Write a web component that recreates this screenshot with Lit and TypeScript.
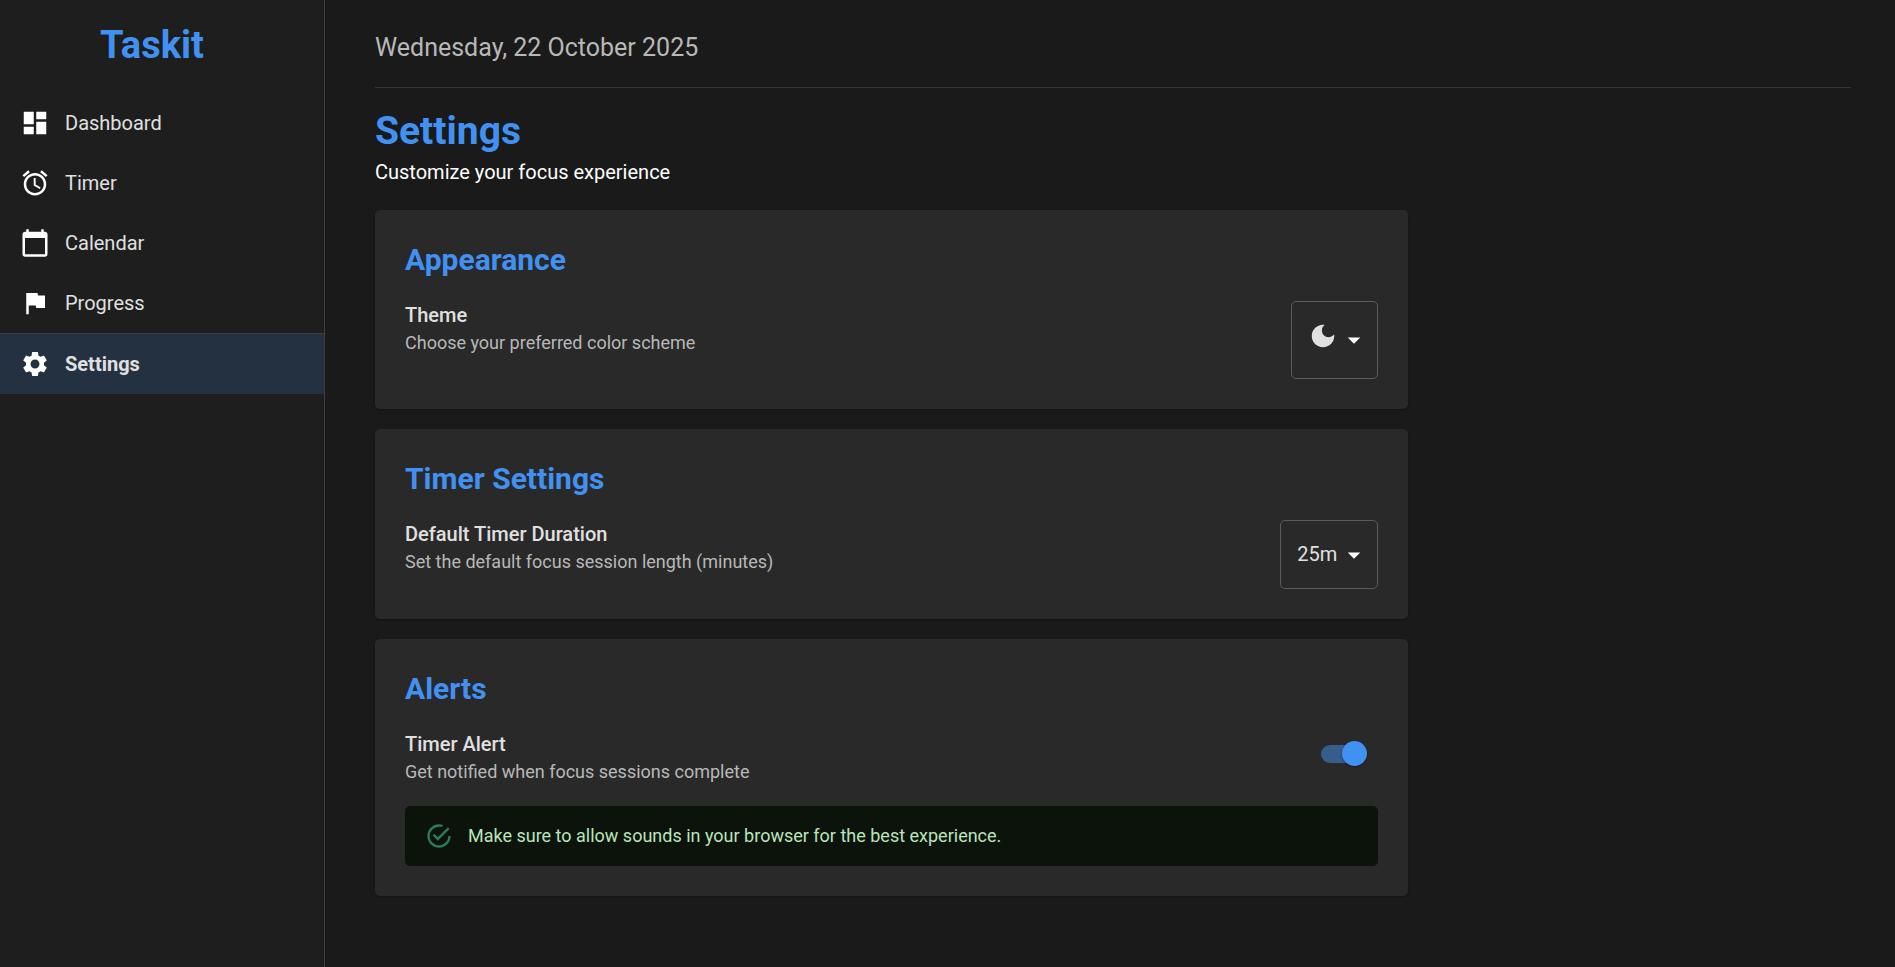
import { LitElement, html, css, svg } from "lit";
import { customElement, state } from "lit/decorators.js";

const icons = {
  dashboard: svg`<path d="M3 13h8V3H3v10zm0 8h8v-6H3v6zm10 0h8V11h-8v10zm0-18v6h8V3h-8z"/>`,
  timer: svg`<path d="M22 5.72l-4.6-3.86-1.29 1.53 4.6 3.86L22 5.72zM7.88 3.39L6.6 1.86 2 5.71l1.29 1.53 4.59-3.85zM12.5 8H11v6l4.75 2.85.75-1.23-4-2.37V8zM12 4c-4.97 0-9 4.03-9 9s4.02 9 9 9c4.97 0 9-4.03 9-9s-4.03-9-9-9zm0 16c-3.87 0-7-3.13-7-7s3.13-7 7-7 7 3.13 7 7-3.13 7-7 7z"/>`,
  calendar: svg`<path d="M20 3h-1V1h-2v2H7V1H5v2H4c-1.1 0-2 .9-2 2v16c0 1.1.9 2 2 2h16c1.1 0 2-.9 2-2V5c0-1.1-.9-2-2-2zm0 18H4V8h16v13z"/>`,
  flag: svg`<path d="M14.4 6L14 4H5v17h2v-7h5.6l.4 2h7V6z"/>`,
  gear: svg`<path d="M19.14 12.94c.04-.3.06-.61.06-.94 0-.32-.02-.64-.07-.94l2.03-1.58c.18-.14.23-.41.12-.61l-1.92-3.32c-.12-.22-.37-.29-.59-.22l-2.39.96c-.5-.38-1.03-.7-1.62-.94l-.36-2.54c-.04-.24-.24-.41-.48-.41h-3.84c-.24 0-.43.17-.47.41l-.36 2.54c-.59.24-1.13.57-1.62.94l-2.39-.96c-.22-.08-.47 0-.59.22L2.74 8.87c-.12.21-.08.47.12.61l2.03 1.58c-.05.3-.09.63-.09.94s.02.64.07.94l-2.03 1.58c-.18.14-.23.41-.12.61l1.92 3.32c.12.22.37.29.59.22l2.39-.96c.5.38 1.03.7 1.62.94l.36 2.54c.05.24.24.41.48.41h3.84c.24 0 .44-.17.47-.41l.36-2.54c.59-.24 1.13-.56 1.62-.94l2.39.96c.22.08.47 0 .59-.22l1.92-3.32c.12-.22.07-.47-.12-.61l-2.01-1.58zM12 15.6c-1.98 0-3.6-1.62-3.6-3.6s1.62-3.6 3.6-3.6 3.6 1.62 3.6 3.6-1.62 3.6-3.6 3.6z"/>`,
  moon: svg`<path d="M12 3c-4.97 0-9 4.03-9 9s4.03 9 9 9 9-4.03 9-9c0-.46-.04-.92-.1-1.36-.98 1.37-2.58 2.26-4.4 2.26-2.98 0-5.4-2.42-5.4-5.4 0-1.81.89-3.42 2.26-4.4-.44-.06-.9-.1-1.36-.1z"/>`,
  caret: svg`<path d="M7 10l5 5 5-5z"/>`,
  check: svg`<path d="M20,12A8,8 0 0,1 12,20A8,8 0 0,1 4,12A8,8 0 0,1 12,4C12.76,4 13.5,4.11 14.2,4.31L15.77,2.74C14.61,2.26 13.34,2 12,2A10,10 0 0,0 2,12A10,10 0 0,0 12,22A10,10 0 0,0 22,12M7.91,10.08L6.5,11.5L11,16L21,6L19.59,4.58L11,13.17L7.91,10.08Z"/>`,
};

const icon = (name: keyof typeof icons, cls = "icon") =>
  html`<svg class=${cls} viewBox="0 0 24 24" fill="currentColor" aria-hidden="true">${icons[name]}</svg>`;

const nav: { label: string; icon: keyof typeof icons; current?: boolean }[] = [
  { label: "Dashboard", icon: "dashboard" },
  { label: "Timer", icon: "timer" },
  { label: "Calendar", icon: "calendar" },
  { label: "Progress", icon: "flag" },
  { label: "Settings", icon: "gear", current: true },
];

@customElement("app-root")
export class AppRoot extends LitElement {
  static styles = css`
    :host {
      display: flex;
      min-height: 100vh;
      background: #1a1a1a;
      color: #fff;
      font-family: Roboto, "Liberation Sans", sans-serif;
      font-size: 20px;
      line-height: 28px;
      --accent: #4191f2;
      --text: #e0e0e0;
      --muted: #b8b8b8;
      --line: #3e3e3e;
    }
    * { box-sizing: border-box; }
    h1, h2, p { margin: 0; }
    .icon { width: 30px; height: 30px; flex: none; display: block; }

    .sidebar {
      flex: 0 0 325px;
      background: #1e1e1e;
      border-right: 1px solid var(--line);
    }
    .brand {
      padding: 20px 20px 23px 0;
      text-align: center;
      font-size: 38px;
      line-height: 50px;
      font-weight: 700;
      color: var(--accent);
    }
    .link {
      display: flex;
      align-items: center;
      gap: 15px;
      height: 60px;
      padding: 0 20px;
      color: var(--text);
      text-decoration: none;
    }
    .link .icon { color: #fff; }
    .link.current {
      height: 61px;
      background: #243140;
      border-top: 1px solid var(--line);
      font-weight: 700;
    }

    .main { flex: 1; min-width: 0; padding: 0 44px 50px 50px; }
    .date {
      padding: 30px 0 22px;
      border-bottom: 1px solid #363636;
      font-size: 25px;
      line-height: 35px;
      color: var(--muted);
    }
    .title {
      padding-top: 18px;
      font-size: 39px;
      line-height: 50px;
      font-weight: 700;
      color: var(--accent);
    }
    .lead { padding: 2px 0 24px; }
    .cards { display: grid; gap: 20px; width: 70%; }
    .card {
      padding: 30px;
      background: #292929;
      border-radius: 5px;
      box-shadow: 0 1px 2px rgba(0, 0, 0, 0.3);
    }
    .heading {
      margin-bottom: 21px;
      font-size: 30px;
      line-height: 40px;
      font-weight: 700;
      color: var(--accent);
    }
    .row { display: flex; justify-content: space-between; align-items: flex-start; }
    .label { display: block; font-weight: 500; color: var(--text); }
    .hint { font-size: 18px; color: var(--muted); }

    .picker { position: relative; color: var(--text); }
    .picker select {
      display: block;
      appearance: none;
      margin: 0;
      padding: 0 40px 2px 16px;
      background: transparent;
      border: 1px solid #5b5b5b;
      border-radius: 5px;
      color: inherit;
      font: inherit;
      cursor: pointer;
    }
    .picker option { background: #292929; color: var(--text); }
    .duration select { width: 98px; height: 69px; }
    .theme select { width: 87px; height: 78px; color: transparent; }
    .glyphs {
      position: absolute;
      inset: 0 9px 0 0;
      display: flex;
      align-items: center;
      justify-content: flex-end;
      gap: 1px;
      pointer-events: none;
    }
    .moon { width: 30px; height: 30px; margin-bottom: 8px; }
    .caret { width: 30px; height: 30px; color: #fff; }

    .switch {
      appearance: none;
      display: grid;
      align-items: center;
      width: 46px;
      height: 25px;
      margin: 11px 11px 0 0;
      cursor: pointer;
    }
    .switch::before, .switch::after { content: ""; grid-area: 1 / 1; }
    .switch::before {
      width: 42px;
      height: 18px;
      border-radius: 9px;
      background: #777;
    }
    .switch::after {
      width: 25px;
      height: 25px;
      border-radius: 50%;
      background: #e0e0e0;
      box-shadow: 0 1px 2px rgba(0, 0, 0, 0.4);
    }
    .switch:checked::before { background: #365d8c; }
    .switch:checked::after { background: var(--accent); justify-self: end; }

    .notice {
      display: flex;
      align-items: center;
      gap: 15px;
      margin-top: 20px;
      min-height: 60px;
      padding: 0 20px;
      border-radius: 5px;
      background: #0c130b;
      color: #b9e5bd;
      font-size: 18px;
    }
    .notice .icon { width: 28px; height: 28px; color: #2b7d56; }
  `;

  @state() private alertOn = true;

  render() {
    return html`
      <nav class="sidebar" aria-label="Main">
        <div class="brand">Taskit</div>
        ${nav.map(
          (n) => html`<a class="link ${n.current ? "current" : ""}" href="#${n.label.toLowerCase()}"
            >${icon(n.icon)}<span>${n.label}</span></a>`
        )}
      </nav>
      <main class="main">
        <div class="date">Wednesday, 22 October 2025</div>
        <h1 class="title">Settings</h1>
        <p class="lead">Customize your focus experience</p>
        <div class="cards">
          <section class="card">
            <h2 class="heading">Appearance</h2>
            <div class="row">
              <div>
                <label class="label" for="theme">Theme</label>
                <p class="hint">Choose your preferred color scheme</p>
              </div>
              <div class="picker theme">
                <select id="theme">
                  <option>Dark</option>
                  <option>Light</option>
                </select>
                <div class="glyphs">${icon("moon", "moon")}${icon("caret", "caret")}</div>
              </div>
            </div>
          </section>
          <section class="card">
            <h2 class="heading">Timer Settings</h2>
            <div class="row">
              <div>
                <label class="label" for="duration">Default Timer Duration</label>
                <p class="hint">Set the default focus session length (minutes)</p>
              </div>
              <div class="picker duration">
                <select id="duration">
                  <option>25m</option>
                  <option>45m</option>
                  <option>60m</option>
                </select>
                <div class="glyphs">${icon("caret", "caret")}</div>
              </div>
            </div>
          </section>
          <section class="card">
            <h2 class="heading">Alerts</h2>
            <div class="row">
              <div>
                <label class="label" for="alert">Timer Alert</label>
                <p class="hint">Get notified when focus sessions complete</p>
              </div>
              <input
                class="switch"
                id="alert"
                type="checkbox"
                role="switch"
                .checked=${this.alertOn}
                @change=${(e: Event) => (this.alertOn = (e.target as HTMLInputElement).checked)}
              />
            </div>
            <div class="notice" role="status">
              ${icon("check")}<span>Make sure to allow sounds in your browser for the best experience.</span>
            </div>
          </section>
        </div>
      </main>
    `;
  }
}
